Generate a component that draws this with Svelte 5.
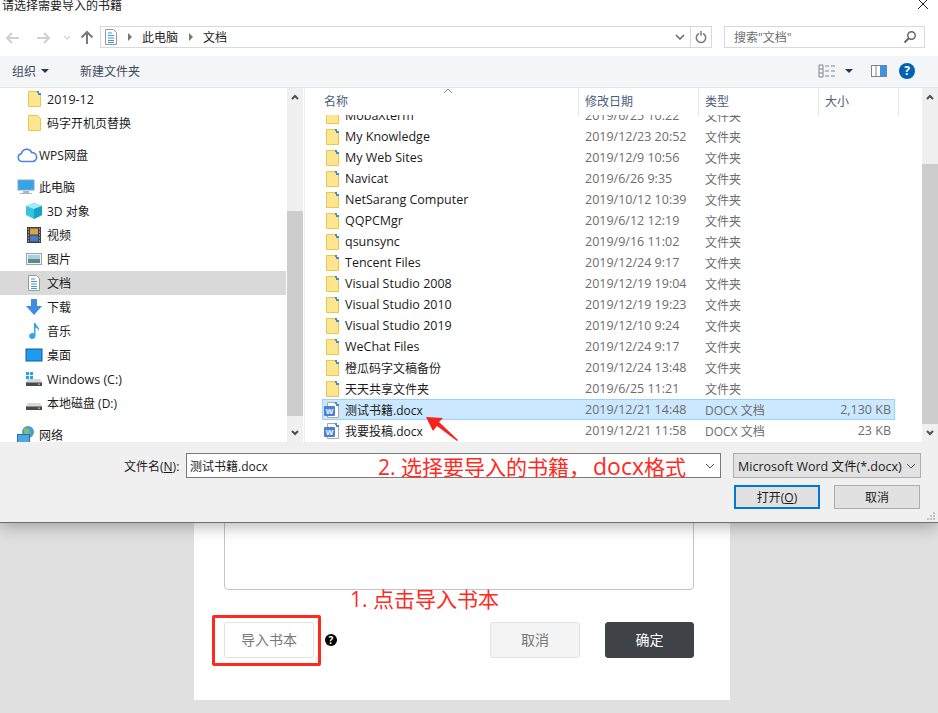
<script>
  const tree = [
    { name: '2019-12', icon: 'folderBlue', indent: true },
    { name: '码字开机页替换', icon: 'folder', indent: true },
    { name: 'WPS网盘', icon: 'cloud', gap: true },
    { name: '此电脑', icon: 'pc', gap: true },
    { name: '3D 对象', icon: 'cube', indent: true },
    { name: '视频', icon: 'film', indent: true },
    { name: '图片', icon: 'picture', indent: true },
    { name: '文档', icon: 'doc', indent: true, active: true },
    { name: '下载', icon: 'download', indent: true },
    { name: '音乐', icon: 'music', indent: true },
    { name: '桌面', icon: 'desktop', indent: true },
    { name: 'Windows (C:)', icon: 'winDrive', indent: true },
    { name: '本地磁盘 (D:)', icon: 'drive', indent: true },
    { name: '网络', icon: 'network', gap: true }
  ]

  const files = [
    { name: 'MobaXterm', date: '2019/6/25 10:22', type: '文件夹', icon: 'folder' },
    { name: 'My Knowledge', date: '2019/12/23 20:52', type: '文件夹', icon: 'folderBlue' },
    { name: 'My Web Sites', date: '2019/12/9 10:56', type: '文件夹', icon: 'folderBlue' },
    { name: 'Navicat', date: '2019/6/26 9:35', type: '文件夹', icon: 'folderBlue' },
    { name: 'NetSarang Computer', date: '2019/10/12 10:39', type: '文件夹', icon: 'folderBlue' },
    { name: 'QQPCMgr', date: '2019/6/12 12:19', type: '文件夹', icon: 'folderBlue' },
    { name: 'qsunsync', date: '2019/9/16 11:02', type: '文件夹', icon: 'folderBlue' },
    { name: 'Tencent Files', date: '2019/12/24 9:17', type: '文件夹', icon: 'folderBlue' },
    { name: 'Visual Studio 2008', date: '2019/12/19 19:04', type: '文件夹', icon: 'folderBlue' },
    { name: 'Visual Studio 2010', date: '2019/12/19 19:23', type: '文件夹', icon: 'folderBlue' },
    { name: 'Visual Studio 2019', date: '2019/12/10 9:24', type: '文件夹', icon: 'folderBlue' },
    { name: 'WeChat Files', date: '2019/12/24 9:17', type: '文件夹', icon: 'folderBlue' },
    { name: '橙瓜码字文稿备份', date: '2019/12/24 13:48', type: '文件夹', icon: 'folderBlue' },
    { name: '天天共享文件夹', date: '2019/6/25 11:21', type: '文件夹', icon: 'folderBlue' },
    { name: '测试书籍.docx', date: '2019/12/21 14:48', type: 'DOCX 文档', size: '2,130 KB', icon: 'word', selected: true },
    { name: '我要投稿.docx', date: '2019/12/21 11:58', type: 'DOCX 文档', size: '23 KB', icon: 'word' }
  ]

  // latin names read a bit wider in the original than the cjk ones
  const isLatin = s => /^[\x20-\x7e]+$/.test(s)
</script>

{#snippet icon(kind)}
  <svg class="ico" width="24" height="18" viewBox="0 0 24 18">
    {#if kind === 'folder' || kind === 'folderBlue'}
      <path d="M4.5 1.5h9l3 3v12h-12z" fill="#fde68f" stroke="#e9c74f" />
      {#if kind === 'folderBlue'}
        <path d="M13 1h2v2h2v2h-3v-2h-1z" fill="#3d8bd0" />
      {/if}
    {:else if kind === 'cloud'}
      <path d="M6 15.5a4 4 0 0 1-.6-7.9 5.500 5.500 0 0 1 10.400-1 4.500 4.500 0 0 1 1.200 8.900z" fill="#fff" stroke="#4b86e8" stroke-width="1.600" />
    {:else if kind === 'pc'}
      <rect x="2" y="2" width="16" height="10" fill="#35a4ea" stroke="#8aa5b8" />
      <path d="M7 13h6v2h3v1h-12v-1h3z" fill="#a9b7c2" />
    {:else if kind === 'cube'}
      <path d="M10 1l8 3v9l-8 4-8-4v-9z" fill="#35c4dc" />
      <path d="M10 1l8 3-8 3-8-3z" fill="#a6eaf4" />
      <path d="M10 7l8-3v9l-8 4z" fill="#14a3c7" />
    {:else if kind === 'film'}
      <rect x="3" y="1" width="14" height="16" fill="#3f3f46" />
      <rect x="6" y="2.5" width="8" height="6" fill="#d9a441" />
      <rect x="6" y="9.5" width="8" height="6" fill="#4a79c9" />
      <path d="M4 3h1M4 6h1M4 9h1M4 12h1M4 15h1M15 3h1M15 6h1M15 9h1M15 12h1M15 15h1" stroke="#ddd" />
    {:else if kind === 'picture'}
      <rect x="2.5" y="3.5" width="15" height="11" fill="#eef3f6" stroke="#9aa5ad" />
      <rect x="4" y="5" width="12" height="4" fill="#a9cfe6" />
      <rect x="4" y="9" width="12" height="4" fill="#5f8d7d" />
    {:else if kind === 'doc'}
      <path d="M4.5 1.5h8l3 3v12h-11z" fill="#fff" stroke="#9a9a9a" />
      <path d="M7 5h4M7 7.500h6M7 10h6M7 12.500h6M7 14.500h6" stroke="#3b9ad9" />
    {:else if kind === 'download'}
      <path d="M7 1h6v7h5l-8 9-8-9h5z" fill="#3d8ee0" />
    {:else if kind === 'music'}
      <path d="M10 1h1.500c.5 3 4.500 4 3.500 8-.6-2-2-3-3.500-3.500V14a3.200 3 0 1 1-1.500-2.500z" fill="#2ea6ec" />
    {:else if kind === 'desktop'}
      <rect x="2" y="3" width="16" height="12" fill="#1e9bf0" stroke="#0f5f99" />
    {:else if kind === 'winDrive' || kind === 'drive'}
      <path d="M4 9h12l2 3v4h-16v-4z" fill="#d7d7d7" />
      <rect x="2" y="12.500" width="16" height="3.500" fill="#4a4a4a" />
      <rect x="14" y="13.500" width="2" height="1.500" fill="#5fd35f" />
      {#if kind === 'winDrive'}
        <path d="M2 2h3v3h-3zM6 2h3v3h-3zM2 6h3v3h-3zM6 6h3v3h-3z" fill="#1fa5ea" />
      {/if}
    {:else if kind === 'network'}
      <circle cx="12" cy="6" r="6" fill="#4d9bd6" />
      <path d="M8 3c3-2 6 0 6 3s-3 3-6 2z" fill="#7cc06a" />
      <rect x="1.500" y="8.500" width="12" height="8" fill="#4fa6e4" stroke="#2a6ea8" />
    {:else if kind === 'word'}
      <path d="M5.500 1.500h8l3 3v12h-11z" fill="#fff" stroke="#a9a9a9" />
      <path d="M13 1h2v2h2v2h-3v-2h-1z" fill="#3d8bd0" />
      <rect x="2" y="5" width="11" height="10" rx="1" fill="#4a7fdc" />
      <text x="7.500" y="13" text-anchor="middle" font-size="8" font-weight="700" font-family="Liberation Sans, sans-serif" fill="#fff">W</text>
    {/if}
  </svg>
{/snippet}

{#snippet scrollbar(kind)}
  <div class="scrollbar {kind}">
    <svg class="sb-arrow" width="16" height="18" viewBox="0 0 16 18"><path d="M5 11l3-3 3 3" fill="none" stroke="#505050" stroke-width="2" /></svg>
    <div class="thumb"></div>
    <svg class="sb-arrow down" width="16" height="18" viewBox="0 0 16 18"><path d="M5 7l3 3 3-3" fill="none" stroke="#505050" stroke-width="2" /></svg>
  </div>
{/snippet}

<div class="page">
  <div class="dialog">
    <div class="titlebar">
      <span>请选择需要导入的书籍</span>
      <svg width="12" height="12" viewBox="0 0 12 12"><path d="M1 0l10 10M11 0l-10 10" stroke="#222" fill="none" /></svg>
    </div>

    <div class="navbar">
      <svg class="nav-arrows" width="94" height="20" viewBox="0 0 94 20">
        <path d="M19 10h-12M12 5l-5 5 5 5" fill="none" stroke="#d0d0d0" stroke-width="2" />
        <path d="M37 10h12M44 5l5 5-5 5" fill="none" stroke="#d0d0d0" stroke-width="2" />
        <path d="M64 8l3 3 3-3" fill="none" stroke="#d8d8d8" stroke-width="1.500" />
        <path d="M87 16v-12M81.500 9.500l5.500-5.500 5.500 5.500" fill="none" stroke="#7a7a7a" stroke-width="2" />
      </svg>
      <div class="address">
        {@render icon('doc')}
        <svg class="crumb" width="6" height="8" viewBox="0 0 6 8"><path d="M1 0l4 4-4 4z" fill="#777" /></svg>
        <span>此电脑</span>
        <svg class="crumb" width="6" height="8" viewBox="0 0 6 8"><path d="M1 0l4 4-4 4z" fill="#777" /></svg>
        <span>文档</span>
        <svg class="addr-drop" width="10" height="6" viewBox="0 0 10 6"><path d="M1 1l4 4 4-4" fill="none" stroke="#666" stroke-width="1.500" /></svg>
        <div class="refresh">
          <svg width="12" height="14" viewBox="0 0 12 14"><path d="M8 3.500a4.700 4.700 0 1 1-4 0M6 1v4h-.500" fill="none" stroke="#777" stroke-width="1.500" /></svg>
        </div>
      </div>
      <div class="search">
        <span>搜索"文档"</span>
        <svg width="14" height="14" viewBox="0 0 14 14"><circle cx="8.500" cy="5.500" r="3.700" fill="none" stroke="#666" stroke-width="1.500" /><path d="M6 8l-4.500 4.500" stroke="#666" stroke-width="2" /></svg>
      </div>
    </div>

    <div class="toolbar">
      <span class="tool">组织<i class="caret"></i></span>
      <span class="tool new-folder">新建文件夹</span>
      <div class="tool-right">
        <svg width="18" height="14" viewBox="0 0 18 14"><path d="M1 1h4v12h-4zM1 5h4M1 9h4M7 2h4M7 7h4M7 12h4M13 2h4M13 7h4M13 12h4" fill="none" stroke="#7a8594" /></svg>
        <i class="caret"></i>
        <svg class="pane" width="16" height="12" viewBox="0 0 16 12"><rect x=".5" y=".5" width="15" height="11" fill="#fff" stroke="#7a8594" /><rect x="9" y="1" width="6" height="10" fill="#3c93e0" /><path d="M5 1v10" stroke="#7a8594" /></svg>
        <span class="help">?</span>
      </div>
    </div>

    <div class="main">
      <nav class="tree">
        {#each tree as item}
          <div class="tree-item" class:active={item.active} class:indent={item.indent} class:gap={item.gap}>
            {@render icon(item.icon)}
            <span class:latin={isLatin(item.name)}>{item.name}</span>
          </div>
        {/each}
      </nav>
      {@render scrollbar('tree-bar')}
      <div class="files">
        <div class="list-head">
          <div class="col col-name">名称<svg class="sort" width="10" height="5" viewBox="0 0 10 5"><path d="M1 5l4-4 4 4" fill="none" stroke="#888" /></svg></div>
          <div class="col col-date">修改日期</div>
          <div class="col col-type">类型</div>
          <div class="col col-size">大小</div>
        </div>
        <div class="rows">
          {#each files as file}
            <div class="row" class:selected={file.selected}>
              <div class="cell-name">
                {@render icon(file.icon)}
                <span class:latin={isLatin(file.name)}>{file.name}</span>
              </div>
              <div class="cell-date latin">{file.date}</div>
              <div class="cell-type">{file.type}</div>
              <div class="cell-size latin">{file.size ?? ''}</div>
            </div>
          {/each}
        </div>
      </div>
      {@render scrollbar('file-bar')}
    </div>

    <div class="footer">
      <div class="field-row">
        <span class="field-label">文件名(<u>N</u>):</span>
        <div class="name-input">
          <span>测试书籍.docx</span>
          <svg width="10" height="6" viewBox="0 0 10 6"><path d="M1 1l4 4 4-4" fill="none" stroke="#555" /></svg>
        </div>
        <div class="filter">
          <span>Microsoft Word 文件(*.docx)</span>
          <svg width="10" height="6" viewBox="0 0 10 6"><path d="M1 1l4 4 4-4" fill="none" stroke="#555" /></svg>
        </div>
      </div>
      <div class="button-row">
        <button class="win-btn primary">打开(<u>O</u>)</button>
        <button class="win-btn">取消</button>
      </div>
      <svg class="grip" width="10" height="10" viewBox="0 0 10 10"><path d="M7 1h2v2h-2zM4 4h2v2h-2zM7 4h2v2h-2zM1 7h2v2h-2zM4 7h2v2h-2zM7 7h2v2h-2z" fill="#c4c4c4" /></svg>
    </div>

    <div class="note note-two">2. 选择要导入的书籍，<span class="note-ext">docx</span>格式</div>
    <svg class="arrow" width="34" height="24" viewBox="0 0 34 24"><path d="M0 0l17 1-4 4 19 18-1 1-20-15-4 5z" fill="#f5231c" /></svg>
  </div>

  <div class="card">
    <div class="textarea"></div>
    <div class="actions">
      <button class="web-btn">导入书本</button>
      <span class="tip">?</span>
      <button class="web-btn muted">取消</button>
      <button class="web-btn dark">确定</button>
    </div>
    <div class="note note-one">1. 点击导入书本</div>
    <div class="highlight"></div>
  </div>
</div>

<style>
  :global(body) {
    margin: 0;
    background: #e0e0e0;
    overflow: hidden;
  }
  .page {
    position: relative;
    width: 938px;
    height: 713px;
    font-family: "Open Sans", "Noto Sans CJK SC", sans-serif;
    font-size: 12px;
    color: #1a1a1a;
    overflow: hidden;
  }
  .latin { font-size: 12.5px; }
  .dialog {
    position: relative;
    z-index: 2;
    height: 523px;
    box-sizing: border-box;
    background: #fff;
    border-bottom: 1px solid #6e6e6e;
    box-shadow: 0 3px 16px rgba(0, 0, 0, 0.3);
    display: flex;
    flex-direction: column;
  }
  .titlebar {
    height: 16px;
    display: flex;
    justify-content: space-between;
    padding: 0 9px 0 2px;
    line-height: 11px;
    color: #222;
  }
  .titlebar svg { margin-top: -1px; }
  .navbar {
    height: 40px;
    display: flex;
    align-items: flex-start;
    padding: 10px 13px 0 0;
    box-sizing: border-box;
  }
  .nav-arrows { margin: 2px 6px 0 0; flex: none; }
  .address {
    width: 612px;
    height: 22px;
    box-sizing: border-box;
    border: 1px solid #d9d9d9;
    display: flex;
    align-items: center;
    flex: none;
    color: #222;
  }
  .crumb { margin: 0 9px 0 10px; }
  .address .ico { margin-right: -8px; }
  .addr-drop { margin-left: auto; margin-right: 5px; }
  .refresh {
    width: 20px;
    height: 20px;
    border-left: 1px solid #d9d9d9;
    display: flex;
    align-items: center;
    justify-content: center;
  }
  .search {
    width: 201px;
    height: 22px;
    box-sizing: border-box;
    margin-left: 12px;
    border: 1px solid #d9d9d9;
    display: flex;
    align-items: center;
    justify-content: space-between;
    padding: 0 7px 0 9px;
    color: #6d6d6d;
    flex: none;
  }
  .toolbar {
    height: 32px;
    box-sizing: border-box;
    background: #f4f5f7;
    border-bottom: 1px solid #e5e5e5;
    display: flex;
    align-items: center;
    padding: 0 23px 2px 12px;
    color: #3c4a5c;
  }
  .tool { display: flex; align-items: center; }
  .caret {
    display: inline-block;
    width: 0;
    height: 0;
    border: 4px solid transparent;
    border-top: 4px solid #1e395b;
    border-bottom: 0;
    margin-left: 5px;
  }
  .new-folder { margin-left: 31px; }
  .tool-right { margin-left: auto; display: flex; align-items: center; }
  .tool-right .caret { margin-left: 9px; }
  .pane { margin: 0 12px 0 18px; }
  .help {
    width: 16px;
    height: 16px;
    border-radius: 50%;
    background: #0063b1;
    color: #fff;
    font-weight: 700;
    font-size: 12px;
    line-height: 16px;
    text-align: center;
  }
  .main {
    height: 354px;
    display: flex;
    overflow: hidden;
  }
  .tree {
    width: 287px;
    flex: none;
    height: 354px;
    overflow: hidden;
  }
  .tree-item {
    height: 24px;
    display: flex;
    align-items: center;
    padding-left: 16px;
    width: 286px;
    box-sizing: border-box;
    color: #1a1a1a;
  }
  .tree-item:first-child { margin-top: -1px; }
  .tree-item.indent { padding-left: 24px; }
  .tree-item.gap { margin-top: 8px; }
  .tree-item .ico { margin-right: -1px; }
  .tree-item.active { background: #d9d9d9; }
  .scrollbar {
    width: 16px;
    flex: none;
    background: #f0f0f0;
    display: flex;
    flex-direction: column;
  }
  .sb-arrow { flex: none; }
  .sb-arrow.down { margin-top: auto; }
  .thumb { background: #cdcdcd; }
  .tree-bar .thumb { margin-top: 105px; height: 205px; }
  .file-bar .thumb { margin-top: 58px; height: 262px; }
  .files {
    flex: 1;
    min-width: 0;
    margin-left: 1px;
    border-left: 1px solid #f0f0f0;
    overflow: hidden;
    padding-left: 17px;
  }
  .list-head {
    position: relative;
    z-index: 1;
    height: 27px;
    display: flex;
    background: #fff;
    color: #4c607a;
  }
  .col {
    box-sizing: border-box;
    border-right: 1px solid #e5e5e5;
    padding: 5px 0 0 6px;
    line-height: 17px;
    position: relative;
  }
  .col-name { width: 257px; padding-left: 2px; }
  .col-date { width: 120px; }
  .col-type { width: 120px; }
  .col-size { width: 80px; }
  .sort { position: absolute; left: 121px; top: 0; }
  .rows { margin-top: -10px; }
  .row {
    height: 21px;
    width: 573px;
    box-sizing: border-box;
    border: 1px solid transparent;
    display: flex;
    align-items: center;
    color: #6d6d6d;
  }
  .row.selected {
    background: #cce8ff;
    border-color: #99d1ff;
  }
  .cell-name {
    width: 263px;
    flex: none;
    display: flex;
    align-items: center;
    color: #1a1a1a;
    margin-left: -1px;
  }
  .cell-name .ico { margin-right: -1px; }
  .cell-date { width: 120px; flex: none; }
  .cell-type { width: 100px; flex: none; }
  .cell-size { width: 86px; flex: none; text-align: right; }
  .footer {
    flex: 1;
    position: relative;
    background: #f0f0f0;
    padding: 11px 17px 0 0;
  }
  .field-row {
    display: flex;
    align-items: center;
  }
  .field-label {
    margin-left: 124px;
    width: 62px;
    flex: none;
  }
  .name-input {
    width: 535px;
    height: 25px;
    box-sizing: border-box;
    background: #fff;
    border: 1px solid #7a7a7a;
    display: flex;
    align-items: center;
    justify-content: space-between;
    padding: 0 5px 0 3px;
    flex: none;
  }
  .filter {
    width: 188px;
    height: 25px;
    margin-left: 12px;
    box-sizing: border-box;
    background: #e1e1e1;
    border: 1px solid #adadad;
    display: flex;
    align-items: center;
    justify-content: space-between;
    padding: 0 4px;
    font-size: 12.5px;
    white-space: nowrap;
    flex: none;
  }
  .button-row {
    display: flex;
    justify-content: flex-end;
    gap: 14px;
    margin: 7px 1px 0 0;
  }
  .win-btn {
    width: 86px;
    height: 24px;
    box-sizing: border-box;
    padding: 0;
    background: #e1e1e1;
    border: 1px solid #adadad;
    font: inherit;
    color: #1a1a1a;
  }
  .win-btn.primary { border: 2px solid #0078d7; }
  .grip { position: absolute; right: 2px; bottom: 1px; }
  .note {
    position: absolute;
    color: #ff2a1f;
    font-size: 21px;
    line-height: 28px;
    white-space: nowrap;
  }
  .note-ext { font-size: 23px; margin-left: 3px; }
  .note-two { left: 378px; top: 452px; }
  .arrow { position: absolute; left: 426px; top: 417px; }
  .card {
    position: absolute;
    left: 194px;
    top: 480px;
    width: 536px;
    height: 220px;
    background: #fff;
    padding: 0 36px 0 30px;
    box-sizing: border-box;
    z-index: 1;
  }
  .textarea {
    height: 110px;
    box-sizing: border-box;
    border: 1px solid #c0c4cc;
    border-radius: 4px;
  }
  .actions {
    display: flex;
    align-items: center;
    margin-top: 32px;
  }
  .web-btn {
    width: 90px;
    height: 36px;
    box-sizing: border-box;
    padding: 0 0 2px;
    background: #fff;
    border: 1px solid #e0e3e6;
    border-radius: 3px;
    color: #777;
    font: inherit;
    font-size: 14px;
  }
  .web-btn.muted { margin-left: auto; background: #f4f4f4; }
  .web-btn.dark {
    margin-left: 25px;
    width: 89px;
    background: #3f4347;
    border-color: #3f4347;
    color: #fff;
  }
  .tip {
    width: 12px;
    height: 12px;
    margin-left: 11px;
    border-radius: 50%;
    background: #000;
    color: #fff;
    font-size: 10px;
    font-weight: 700;
    line-height: 12px;
    text-align: center;
  }
  .note-one { left: 156px; top: 105px; }
  .highlight {
    position: absolute;
    left: 18px;
    top: 135px;
    width: 109px;
    height: 51px;
    box-sizing: border-box;
    border: 3px solid #ff2a1f;
    border-radius: 2px;
  }
</style>
